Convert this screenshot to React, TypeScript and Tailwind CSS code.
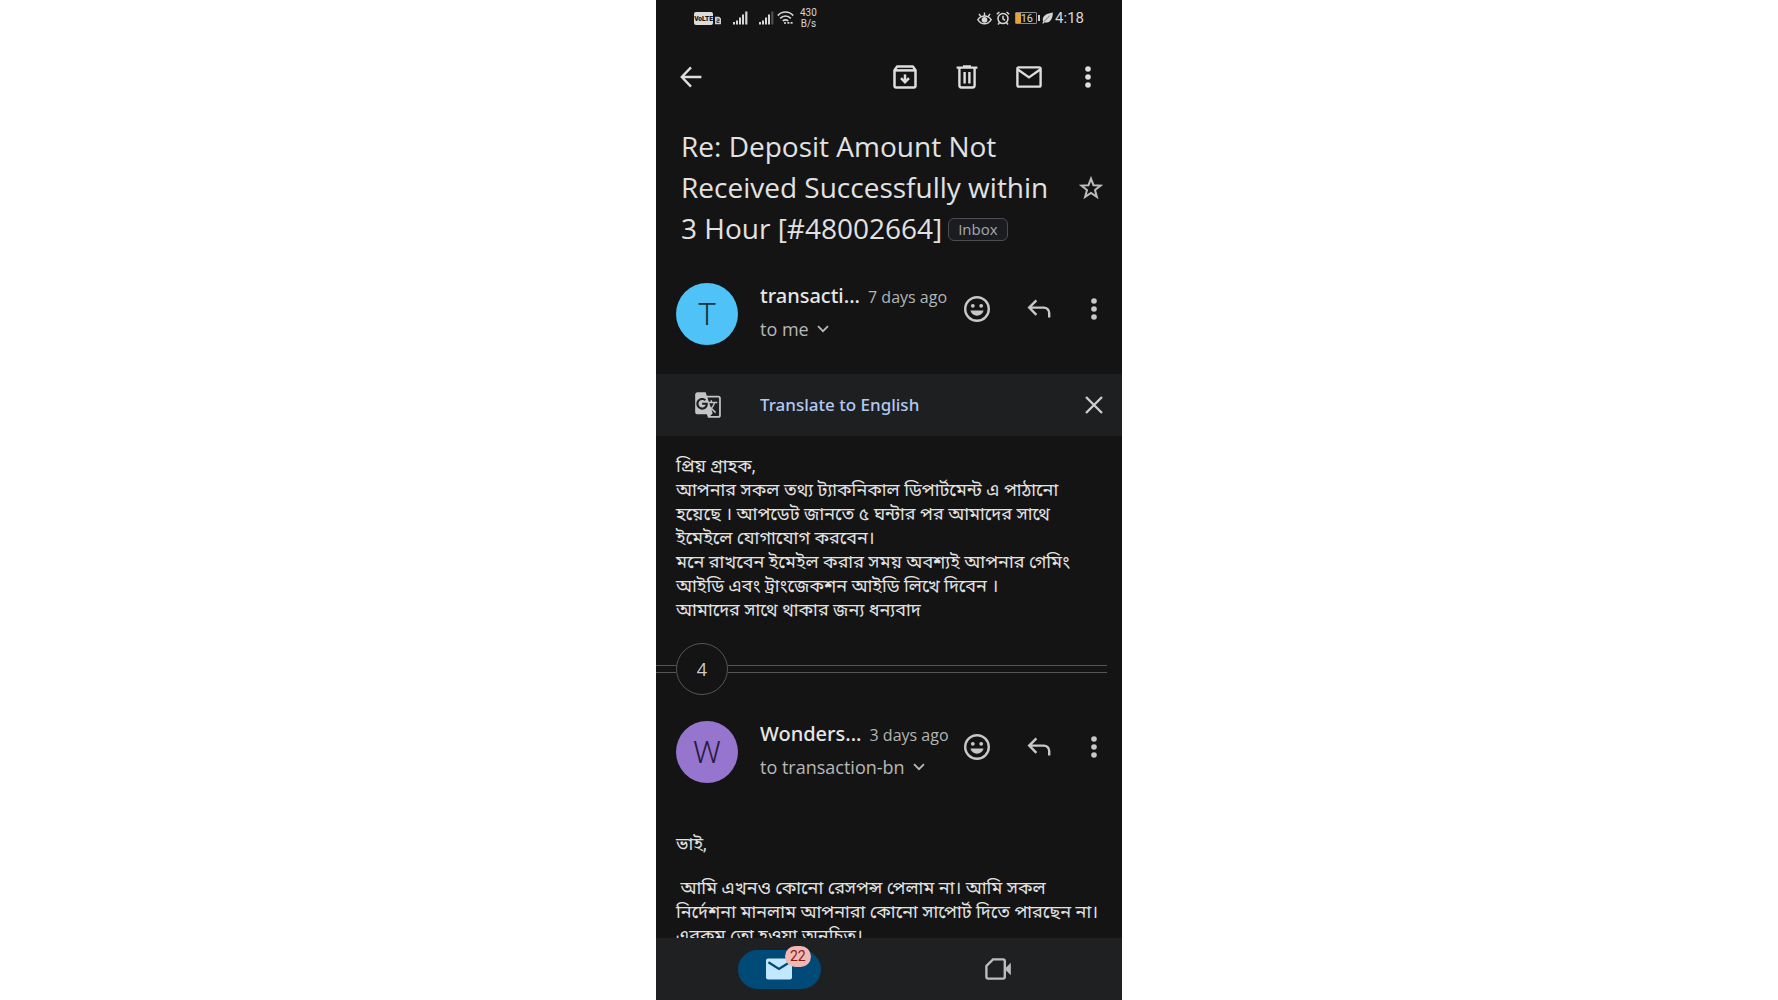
import type { ReactNode } from 'react';
import { MdGTranslate } from 'react-icons/md';

interface MessageHeaderProps {
    initial: string;
    avatarClass: string;
    sender: string;
    date: string;
    recipient: string;
}

function IconButton({ label, className, children }: { label: string; className: string; children: ReactNode }) {
    return (
        <button type="button" aria-label={label} className={`flex h-12 shrink-0 items-center justify-center ${className}`}>
            {children}
        </button>
    );
}

function DotsIcon() {
    return (
        <svg viewBox="0 0 6 22" className="h-[22px] w-[6px]" fill="currentColor">
            <circle cx="3" cy="3" r="2.8" />
            <circle cx="3" cy="11" r="2.8" />
            <circle cx="3" cy="19" r="2.8" />
        </svg>
    );
}

function ChevronIcon() {
    return (
        <svg viewBox="0 0 12 8" className="h-2 w-3" fill="none" stroke="currentColor" strokeWidth="1.8">
            <path d="M1 1.2l5 5 5-5" />
        </svg>
    );
}

function SignalIcon({ faded }: { faded?: boolean }) {
    return (
        <svg viewBox="0 0 15 14" className="h-[14px] w-[15px]" fill="currentColor">
            <rect x="0" y="11" width="2" height="2.5" />
            <rect x="3" y="9.5" width="2" height="4" />
            <rect x="6" y="6.5" width="2" height="7" />
            <rect x="9" y="3.5" width="2" height="10" />
            <rect x="12.2" y="0.5" width="2.2" height="13" opacity={faded ? 0.3 : 1} />
        </svg>
    );
}

function StatusBar() {
    return (
        <div className="flex h-9 shrink-0 items-center px-[38px] font-['Roboto',sans-serif] text-[#d6d6d6]">
            <svg viewBox="0 0 19 13" className="h-[13px] w-[19px]">
                <rect width="19" height="13" rx="2" fill="#dcdcdc" />
                <text x="9.5" y="9" textAnchor="middle" fontSize="6.6" fontWeight="900" fill="#141414">VoLTE</text>
            </svg>
            <svg viewBox="0 0 7 9" className="mt-1 ml-0.5 h-[9px] w-[6px]">
                <path d="M0 0h4.8L7 2.2V9H0z" fill="#cfcfcf" />
                <path d="M2 2.8h2.8v2H2.2v2h3" fill="none" stroke="#141414" strokeWidth="0.9" />
            </svg>
            <span className="ml-3"><SignalIcon /></span>
            <span className="ml-[11px]"><SignalIcon faded /></span>
            <svg viewBox="0 0 17 14" className="ml-[3px] h-[14px] w-[17px]" fill="none" stroke="currentColor" strokeWidth="1.7">
                <path d="M0.8 4.6C5-0.2 12-0.2 16.2 4.6" />
                <path d="M3.2 7.4c3-3.2 7.6-3.2 10.6 0" />
                <path d="M5.8 10c1.6-1.6 3.8-1.6 5.4 0" />
                <circle cx="8" cy="12" r="1.1" fill="currentColor" stroke="none" />
                <path d="M10.4 11.8h2M13.6 11.8h2" />
            </svg>
            <span className="ml-[6px] flex flex-col items-center text-[10px] leading-[11px]">
                <span>430</span>
                <span>B/s</span>
            </span>
            <svg viewBox="0 0 15 13" className="ml-auto h-[13px] w-[15px]" fill="none" stroke="currentColor" strokeWidth="1.4">
                <path d="M0.8 7.6c3.6-4.8 9.8-4.8 13.4 0-3.6 5.6-9.8 5.6-13.4 0z" />
                <circle cx="7.5" cy="7.8" r="2.2" fill="currentColor" />
                <path d="M7.5 4V0.6M3.8 4.6L2 1.8M11.2 4.6L13 1.8" />
            </svg>
            <svg viewBox="0 0 14 14" className="ml-1 h-[14px] w-[14px]" fill="none" stroke="currentColor" strokeWidth="1.5">
                <circle cx="7" cy="7.6" r="5" />
                <path d="M7 4.8v3l2 1.6M0.8 3.2L3.4 1M13.2 3.2L10.6 1M3.4 11.8l-1.4 1.6M10.6 11.8l1.4 1.6" />
            </svg>
            <span className="ml-[5px] flex h-3 w-[22px] items-center justify-end rounded-[1px] border border-[#8c8c8c] bg-linear-to-r from-[#e3a33b] from-25% to-transparent to-25% pr-[3px] text-[11px] leading-none">
                16
            </span>
            <span className="ml-px h-1.5 w-0.5 bg-[#cfcfcf]" />
            <svg viewBox="0 0 11 12" className="ml-0.5 h-3 w-[11px]">
                <path d="M10.8 0.4C5 1.2 0.4 3.6 0.8 8.2c0 .6.2 1 .5 1.4L0.2 11.2l.9.6 1.2-1.4C8 11.4 10.8 7 10.8 0.4z" fill="currentColor" />
                <path d="M2 9.6L7.8 3.6" stroke="#141414" strokeWidth="0.5" />
            </svg>
            <span className="ml-0.5 text-[15px] leading-none">4:18</span>
        </div>
    );
}

function MessageHeader({ initial, avatarClass, sender, date, recipient }: MessageHeaderProps) {
    return (
        <div className="flex items-start pr-1 pl-5">
            <div className={`mt-1 flex size-[62px] shrink-0 items-center justify-center rounded-full font-['Roboto',sans-serif] text-[31px] leading-none font-light ${avatarClass}`}>
                {initial}
            </div>
            <div className="ml-[22px] min-w-0 flex-1 pt-px">
                <div className="flex items-baseline gap-2 leading-8">
                    <span className="font-['Noto_Sans',sans-serif] text-[20px] font-medium text-[#e6e6e6]">{sender}</span>
                    <span className="text-[16px] whitespace-nowrap text-[#b4b4b4]">{date}</span>
                </div>
                <button type="button" className="flex items-center gap-2 text-[18px] leading-8 text-[#b8b8b8]">
                    {recipient}
                    <ChevronIcon />
                </button>
            </div>
            <div className="mt-1.5 flex items-center text-[#c8c8c8]">
                <IconButton label="Add reaction" className="w-[62px]">
                    <svg viewBox="0 0 26 26" className="size-[26px]" fill="none" stroke="currentColor" strokeWidth="2.4">
                        <circle cx="13" cy="13" r="11.8" />
                        <circle cx="8.8" cy="9.8" r="1.9" fill="currentColor" stroke="none" />
                        <circle cx="17.2" cy="9.8" r="1.9" fill="currentColor" stroke="none" />
                        <path d="M6.4 14.6h13.2c-.9 3.2-3.4 5.2-6.6 5.2s-5.7-2-6.6-5.2z" fill="currentColor" stroke="none" />
                    </svg>
                </IconButton>
                <IconButton label="Reply" className="w-[62px]">
                    <svg viewBox="0 0 24 20" className="h-5 w-6" fill="none" stroke="currentColor" strokeWidth="2.4">
                        <path d="M9.4 1.4L2.2 8.6l7.2 7.2M2.6 8.6h14.2a5.4 5.4 0 0 1 5.4 5.4v4.6" />
                    </svg>
                </IconButton>
                <IconButton label="More options" className="w-12">
                    <DotsIcon />
                </IconButton>
            </div>
        </div>
    );
}

export default function App() {
    return (
        <div className="h-screen bg-white">
            <div className="mx-auto flex h-full w-full max-w-[466px] flex-col bg-[#141414] font-['Open_Sans','Noto_Sans_Bengali',sans-serif] text-[#e2e2e2]">
                <StatusBar />

                {/* Toolbar */}
                <header className="flex h-[82px] shrink-0 items-center pr-[6px] pl-[11px] text-[#dedede]">
                    <IconButton label="Back" className="w-12">
                        <svg viewBox="0 0 22 22" className="size-[22px]" fill="none" stroke="currentColor" strokeWidth="2.4">
                            <path d="M11 1.4L1.8 11l9.2 9.6M2 11h19.4" />
                        </svg>
                    </IconButton>
                    <div className="ml-auto flex">
                        <IconButton label="Archive" className="w-[62px]">
                            <svg viewBox="0 0 24 24" className="size-6" fill="none" stroke="currentColor" strokeWidth="2.5">
                                <path d="M1.5 5.2L4 1.6h16l2.5 3.6v15.6q0 1.7-1.7 1.7H3.2q-1.7 0-1.7-1.7z" strokeLinejoin="round" />
                                <path d="M2 5.4h20" />
                                <path d="M12 9.4v6" />
                                <path d="M8 13.2l4 4 4-4" />
                            </svg>
                        </IconButton>
                        <IconButton label="Delete" className="w-[62px]">
                            <svg viewBox="0 0 22 24" className="h-6 w-[22px]" fill="none" stroke="currentColor" strokeWidth="2.4">
                                <path d="M0.6 2.6h20.8M7 1.4h8M3.4 3v17.6q0 1.9 1.9 1.9h11.4q1.9 0 1.9-1.9V3M8.6 7v11.6M13.4 7v11.6" />
                            </svg>
                        </IconButton>
                        <IconButton label="Mark as unread" className="w-[62px]">
                            <svg viewBox="0 0 26 22" className="h-[22px] w-[26px]" fill="none" stroke="currentColor" strokeWidth="2.4">
                                <rect x="1.4" y="1.4" width="23.2" height="19.2" rx="1.4" />
                                <path d="M1.8 3.4L13 11.4l11.2-8" />
                            </svg>
                        </IconButton>
                        <IconButton label="More options" className="w-14">
                            <DotsIcon />
                        </IconButton>
                    </div>
                </header>

                <main className="min-h-0 flex-1 overflow-hidden">
                    {/* Subject */}
                    <div className="flex items-center pt-2 pr-[6px] pl-[25px]">
                        <h1 className="flex-1 text-[28px] leading-[41px]">
                            Re: Deposit Amount Not<br />
                            Received Successfully within<br />
                            3 Hour [#48002664]
                            <span className="ml-1.5 inline-flex h-[23px] items-center rounded-md border border-[#4c4e52] bg-[#1b1c20] px-[9px] align-[4px] text-[15px] leading-none text-[#a6a8ac]">
                                Inbox
                            </span>
                        </h1>
                        <IconButton label="Star" className="w-[50px] text-[#bcbcbc]">
                            <svg viewBox="0 0 24 24" className="size-6" fill="none" stroke="currentColor" strokeWidth="2">
                                <path d="M12 2.6l2.5 6.6 7 .4-5.5 4.4 1.9 6.9L12 17l-5.9 3.9L8 14 2.5 9.6l7-.4z" />
                            </svg>
                        </IconButton>
                    </div>

                    <div className="mt-[30px]">
                        <MessageHeader initial="T" avatarClass="bg-[#4fc3f7] text-[#103440]" sender="transacti..." date="7 days ago" recipient="to me" />
                    </div>

                    {/* Translate banner */}
                    <div className="mt-[29px] flex h-[62px] items-center bg-[#1d1f21] pr-1 pl-[38px]">
                        <MdGTranslate className="size-7 text-[#c4c4c4]" />
                        <button type="button" className="ml-[38px] font-['Noto_Sans',sans-serif] text-[17px] leading-6 font-medium text-[#b3c8f2]">
                            Translate to English
                        </button>
                        <IconButton label="Dismiss" className="ml-auto w-12 text-[#cfcfcf]">
                            <svg viewBox="0 0 18 18" className="size-[18px]" fill="none" stroke="currentColor" strokeWidth="2.3">
                                <path d="M1 1l16 16M17 1L1 17" />
                            </svg>
                        </IconButton>
                    </div>

                    <div lang="bn" className="mt-[18px] px-5 font-['Roboto','Noto_Sans_Bengali',sans-serif] text-[18px] leading-6">
                        <p>প্রিয় গ্রাহক,</p>
                        <p>আপনার সকল তথ্য ট্যাকনিকাল ডিপার্টমেন্ট এ পাঠানো<br />হয়েছে । আপডেট জানতে ৫ ঘন্টার পর আমাদের সাথে<br />ইমেইলে যোগাযোগ করবেন।</p>
                        <p>মনে রাখবেন ইমেইল করার সময় অবশ্যই আপনার গেমিং<br />আইডি এবং ট্রাংজেকশন আইডি লিখে দিবেন ।</p>
                        <p>আমাদের সাথে থাকার জন্য ধন্যবাদ</p>
                    </div>

                    {/* Collapsed messages */}
                    <div className="mt-[21px] mr-[15px] flex items-center">
                        <span className="h-2 w-5 border-y border-[#555555]" />
                        <button type="button" aria-label="Show 4 more messages" className="size-[52px] rounded-full border border-[#555555] text-[18px] text-[#cccccc]">
                            4
                        </button>
                        <span className="h-2 flex-1 border-y border-[#555555]" />
                    </div>

                    <div className="mt-[22px]">
                        <MessageHeader initial="W" avatarClass="bg-[#9575cd] text-[#2a1a3e]" sender="Wonders..." date="3 days ago" recipient="to transaction-bn" />
                    </div>

                    <div lang="bn" className="mt-[49px] pr-4 pl-5 font-['Roboto','Noto_Sans_Bengali',sans-serif] text-[18px] leading-6">
                        <p>ভাই,</p>
                        <p className="mt-5">&nbsp;আমি এখনও কোনো রেসপন্স পেলাম না। আমি সকল<br /><span className="whitespace-nowrap">নির্দেশনা মানলাম আপনারা কোনো সাপোর্ট দিতে পারছেন না।</span><br />এরকম তো হওয়া অনুচিত।</p>
                    </div>
                </main>

                {/* Bottom tabs */}
                <nav className="flex h-[62px] shrink-0 items-center bg-[#1f2022]">
                    <div className="flex flex-1 justify-center pl-[14px]">
                        <button type="button" aria-label="Mail" className="relative flex h-[39px] w-[83px] items-center justify-center rounded-full bg-[#004a77]">
                            <svg viewBox="0 0 26 22" className="h-[22px] w-[26px]">
                                <rect x="0" y="0.5" width="26" height="21" rx="2" fill="#c2e7ff" />
                                <path d="M2.4 4.2L13 11l10.6-6.8" fill="none" stroke="#004a77" strokeWidth="2.2" />
                            </svg>
                            <span className="absolute -top-1 right-[10px] flex h-[21px] w-[26px] items-center justify-center rounded-full bg-[#f2b8b5] font-['Roboto',sans-serif] text-[14px] leading-none text-[#7d1d1a]">
                                22
                            </span>
                        </button>
                    </div>
                    <div className="flex flex-1 justify-center pr-[15px]">
                        <IconButton label="Meet" className="w-[83px] text-[#bdbdbd]">
                            <svg viewBox="0 0 26 22" className="h-[22px] w-[26px]" fill="none" stroke="currentColor" strokeWidth="2.4">
                                <path d="M8 1.4h10q1.8 0 1.8 1.8v15.6q0 1.8-1.8 1.8H3.2q-1.8 0-1.8-1.8V8z" />
                                <path d="M19.6 11l6.2-6.2v12.4z" fill="currentColor" stroke="none" />
                            </svg>
                        </IconButton>
                    </div>
                </nav>
            </div>
        </div>
    );
}
